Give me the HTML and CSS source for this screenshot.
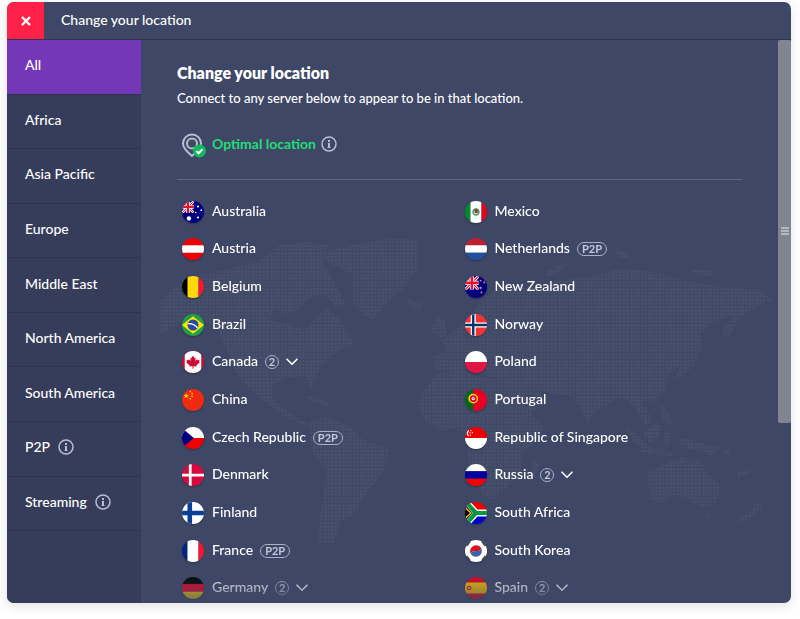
FILE: index.html
```html
<!DOCTYPE html>
<html lang="en">
<head>
    <meta charset="UTF-8">
    <meta name="viewport" content="width=device-width, initial-scale=1">
    <title>Change your location</title>
    <link rel="stylesheet" href="styles.css">
</head>
<body>
    <!-- Shared icons -->
    <svg class="sprite" aria-hidden="true">
        <symbol id="info" viewBox="0 0 16 16">
            <circle cx="8" cy="8" r="7" fill="none" stroke="currentColor" stroke-width="1.5"/>
            <path d="M8 4v2M8 7v5" fill="none" stroke="currentColor" stroke-width="2"/>
            <path d="M6.800 7.500h1.200M6.500 11.500h3" fill="none" stroke="currentColor"/>
        </symbol>
        <symbol id="chevron" viewBox="0 0 12 8">
            <path d="M1 1.2l5 5 5-5" fill="none" stroke="currentColor" stroke-width="1.6" stroke-linecap="round"/>
        </symbol>
        <symbol id="union" viewBox="0 0 12 12">
            <path fill="#00007f" d="M0 0h12v12H0z"/>
            <path d="M0 0l12 12M12 0L0 12" stroke="#fff" stroke-width="2.6"/>
            <path d="M0 0l12 12M12 0L0 12" stroke="#e8112d" stroke-width="1"/>
            <path d="M6 0v12M0 6h12" stroke="#fff" stroke-width="3.6"/>
            <path d="M6 0v12M0 6h12" stroke="#e8112d" stroke-width="2.2"/>
        </symbol>
    </svg>

    <div class="window">
        <header class="titlebar">
            <button class="close" type="button" aria-label="Close">
                <svg viewBox="0 0 12 12" width="12" height="12"><path d="M2 2l8 8M10 2l-8 8" stroke="#fff" stroke-width="2.4"/></svg>
            </button>
            <span class="titlebar-text">Change your location</span>
        </header>

        <div class="body">
            <nav class="sidebar">
                <a class="active" href="#all">All</a>
                <a href="#africa">Africa</a>
                <a href="#asia-pacific">Asia Pacific</a>
                <a href="#europe">Europe</a>
                <a href="#middle-east">Middle East</a>
                <a href="#north-america">North America</a>
                <a href="#south-america">South America</a>
                <a href="#p2p">P2P <svg class="info"><use href="#info"/></svg></a>
                <a href="#streaming">Streaming <svg class="info"><use href="#info"/></svg></a>
            </nav>

            <main class="content">
                <!-- Dotted world map behind the list -->
                <svg class="map" viewBox="141 40 650 563" preserveAspectRatio="xMidYMin meet" aria-hidden="true">
                    <defs>
                        <pattern id="dots" width="3.6" height="3.6" patternUnits="userSpaceOnUse">
                            <rect width="2.5" height="2.5" fill="#48516c"/>
                        </pattern>
                    </defs>
                    <g fill="url(#dots)">
                        <path d="M160 303l13-15 27-13 33-7 24-6 23-17 27-3 20 3-4 20 7 10 10 17 7 16-12-3-7-8-10-2-10 5-11 10-12 5-10-7-5 12 20 5 15 5 10-12 12-10 13 12 15 25-15 5-18 15-11 23-6-12-20 2-12 7-1 13 11 10 17 12 12 5-7 1-15-6-25-18-15-12-13-15-10-25-12-25-25-8-30 18z"/>
                        <path d="M323 252l30-7 37-7 27 2 1 28-15 20-16 14-14 18-10-5-10-13v-27l-26-13z"/>
                        <path d="M407 298l16 7-3 4-11-3zM308 396l14 3 8 6-3 2-12-5-8-3z"/>
                        <path d="M310 422l17-5 26 11 7 10 30 12-7 22-20 26-10 17-13 7-7 21h-15l2-25 7-46-15-20z"/>
                        <path d="M420 397l17-24 26-3 17 8 30 2 12 15 10 20 13 13-10 12-13 15v15l-15 17-15 13-10-5-12-25-3-30-7-12-20 2-15-10-7-15zM533 460l6 5-4 12-5-3z"/>
                        <path d="M435 370l-2-15 14-2-5-13 13-10 15-12 10-18 25-15 25 3 30-8 40-5 20-7 35 4 25 8 50 8 30 2 12 10-14 5-18 13-10 17-8 3 3-13 10-10-23 7-12 11 3 12-8 17-10 13-10 5 5-15-12 10-3 15-10 10-13 2 10 18-7 5-10-17-7-8-10-2-18 10-8 7-4 10-8-17-8-12-17-1-15-5 5 15-15 8-5-13-15-15-15-7-30-8z"/>
                        <path d="M430 330l8-14 7 5 2 14-8 3zM613 247l10 4 10 9-14-3zM545 273l12-7 12-3-7 7-14 7zM692 269l22 2-3 5-18-2z"/>
                        <path d="M625 425l18 15 12 12-5 3-18-15zM643 433l12-9 6 2-2 12-10 5zM660 405l6 3 6 14-5 3-5-8zM640 447l32 5v4l-32-4zM664 432l8 2-4 14-4-4zM680 438l18 4 22 6-8 8-10-5-12-2-10-5zM724 450h5v5h-5z"/>
                        <path d="M648 473l19-10 16-6 10 6 7-3 7 12 15 16-7 15-12 5-16-10-14-3-13 7-10-2zM704 513l7 1-3 6zM738 472l11-3v4l-11 5zM755 500l8 7-10 8-12 8-3-3 14-11z"/>
                    </g>
                </svg>

                <div class="panel">
                    <h1>Change your location</h1>
                    <p>Connect to any server below to appear to be in that location.</p>
                    <div class="optimal">
                        <svg class="pin" viewBox="0 -2 26 26">
                            <path d="M11 1.500a9 9 0 0 0-9 9c0 5.500 5.500 9.500 9 12.500 3.500-3 9-7 9-12.500a9 9 0 0 0-9-9z" fill="none" stroke="#b9bed2" stroke-width="2"/>
                            <circle cx="11" cy="10.500" r="5" fill="none" stroke="#b9bed2" stroke-width="2"/>
                            <circle cx="18.500" cy="18" r="6.500" fill="#10b95c"/>
                            <path d="M15.300 18.100l2.300 2.200 4-4.200" fill="none" stroke="#fff" stroke-width="2"/>
                        </svg>
                        <a href="#optimal">Optimal location</a>
                        <svg class="info"><use href="#info"/></svg>
                    </div>

                    <ul class="countries">
                        <li>
                            <svg class="flag" viewBox="0 0 24 24"><path fill="#00007f" d="M0 0h24v24H0z"/><use href="#union" width="13" height="13"/><circle cx="7.5" cy="19" r="2.4" fill="#fff"/><circle cx="17.5" cy="6" r="1.2" fill="#fff"/><circle cx="15" cy="12.5" r=".9" fill="#fff"/><circle cx="21" cy="10" r="1" fill="#fff"/><circle cx="17.5" cy="18" r="1.2" fill="#fff"/></svg>
                            <a href="#au">Australia</a>
                        </li>
                        <li>
                            <svg class="flag" viewBox="0 0 24 24"><path fill="#f00000" d="M0 0h24v24H0z"/><path fill="#fff" d="M0 8h24v8H0z"/></svg>
                            <a href="#at">Austria</a>
                        </li>
                        <li>
                            <svg class="flag" viewBox="0 0 24 24"><path fill="#000" d="M0 0h7v24H0z"/><path fill="#ffd90c" d="M6 0h12v24H6z"/><path fill="#f31830" d="M18 0h6v24h-6z"/></svg>
                            <a href="#be">Belgium</a>
                        </li>
                        <li>
                            <svg class="flag" viewBox="0 0 24 24"><path fill="#229e45" d="M0 0h24v24H0z"/><path fill="#f8e509" d="M12 2.500L24 12l-12 9.500L0 12z"/><circle cx="12" cy="12" r="6" fill="#2b49a3"/><path d="M6.500 10.500q6-.5 10.500 4.500" fill="none" stroke="#fff" stroke-width="1.3"/></svg>
                            <a href="#br">Brazil</a>
                        </li>
                        <li>
                            <svg class="flag" viewBox="0 0 24 24"><path fill="#d10a35" d="M0 0h24v24H0z"/><path fill="#fff" d="M3 0h18v24H3z"/><path fill="#d10a35" d="M12 5l1.600 2.800 1.500-.8-.8 4 2.200-2 .5 1.200 2.300-.4-.8 2.200 1 .6-3.800 3 .3 1.300-3.500-.4v2.800h-1v-2.800l-3.500.4.300-1.300-3.800-3 1-.6-.8-2.200 2.300.4.500-1.200 2.200 2-.8-4 1.500.8z"/></svg>
                            <a href="#ca">Canada</a>
                            <span class="count">2</span>
                            <button class="expand" type="button" aria-label="Show Canada locations"><svg><use href="#chevron"/></svg></button>
                        </li>
                        <li>
                            <svg class="flag" viewBox="0 0 24 24"><path fill="#ee2a10" d="M0 0h24v24H0z"/><path fill="#ffde00" d="M4.500 4.500l.8 2h2L5.800 7.800l.6 2-1.900-1.200-1.900 1.200.6-2L1.700 6.500h2z"/><g fill="#ffde00"><circle cx="9" cy="2.800" r=".9"/><circle cx="11" cy="5" r=".9"/><circle cx="11" cy="8" r=".9"/><circle cx="9" cy="10.500" r=".9"/></g></svg>
                            <a href="#cn">China</a>
                        </li>
                        <li>
                            <svg class="flag" viewBox="0 0 24 24"><path fill="#fff" d="M0 0h24v12H0z"/><path fill="#f00000" d="M0 12h24v12H0z"/><path fill="#00007f" d="M0 1l13 11L0 23z"/></svg>
                            <a href="#cz">Czech Republic</a>
                            <span class="tag">P2P</span>
                        </li>
                        <li>
                            <svg class="flag" viewBox="0 0 24 24"><path fill="#d9083c" d="M0 0h24v24H0z"/><path d="M9 0v24M0 12h24" stroke="#fff" stroke-width="3"/></svg>
                            <a href="#dk">Denmark</a>
                        </li>
                        <li>
                            <svg class="flag" viewBox="0 0 24 24"><path fill="#fff" d="M0 0h24v24H0z"/><path d="M8.500 0v24M0 12h24" stroke="#063f95" stroke-width="5"/></svg>
                            <a href="#fi">Finland</a>
                        </li>
                        <li>
                            <svg class="flag" viewBox="0 0 24 24"><path fill="#00267f" d="M0 0h6v24H0z"/><path fill="#fff" d="M6 0h12v24H6z"/><path fill="#f31830" d="M18 0h6v24h-6z"/></svg>
                            <a href="#fr">France</a>
                            <span class="tag">P2P</span>
                        </li>
                        <li>
                            <svg class="flag" viewBox="0 0 24 24"><path fill="#000" d="M0 0h24v8H0z"/><path fill="#f00020" d="M0 8h24v8H0z"/><path fill="#ffce00" d="M0 16h24v8H0z"/></svg>
                            <a href="#de">Germany</a>
                            <span class="count">2</span>
                            <button class="expand" type="button" aria-label="Show Germany locations"><svg><use href="#chevron"/></svg></button>
                        </li>
                        <li>
                            <svg class="flag" viewBox="0 0 24 24"><path fill="#008a2a" d="M0 0h6v24H0z"/><path fill="#fff" d="M6 0h12v24H6z"/><path fill="#e3051b" d="M18 0h6v24h-6z"/><circle cx="12" cy="12" r="3.200" fill="none" stroke="#5a9a78" stroke-width="1.6"/><path fill="#7a5230" d="M10 9.500l2.500-1.500 2 3-1 2.500-3-.5z"/></svg>
                            <a href="#mx">Mexico</a>
                        </li>
                        <li>
                            <svg class="flag" viewBox="0 0 24 24"><path fill="#c0202e" d="M0 0h24v8H0z"/><path fill="#fff" d="M0 8h24v8H0z"/><path fill="#2350a0" d="M0 16h24v8H0z"/></svg>
                            <a href="#nl">Netherlands</a>
                            <span class="tag">P2P</span>
                        </li>
                        <li>
                            <svg class="flag" viewBox="0 0 24 24"><path fill="#00007f" d="M0 0h24v24H0z"/><use href="#union" width="15" height="15"/><circle cx="17" cy="5" r="1" fill="#f08a9a"/><circle cx="21" cy="7" r="1" fill="#f08a9a"/><circle cx="17" cy="13" r="1.2" fill="#f08a9a"/><circle cx="18" cy="18" r="1" fill="#f08a9a"/></svg>
                            <a href="#nz">New Zealand</a>
                        </li>
                        <li>
                            <svg class="flag" viewBox="0 0 24 24"><path fill="#f23434" d="M0 0h24v24H0z"/><path d="M9 0v24M0 12h24" stroke="#fff" stroke-width="5.5"/><path d="M9 0v24M0 12h24" stroke="#06306b" stroke-width="2.6"/></svg>
                            <a href="#no">Norway</a>
                        </li>
                        <li>
                            <svg class="flag" viewBox="0 0 24 24"><path fill="#fff" d="M0 0h24v12H0z"/><path fill="#e01543" d="M0 12h24v12H0z"/></svg>
                            <a href="#pl">Poland</a>
                        </li>
                        <li>
                            <svg class="flag" viewBox="0 0 24 24"><path fill="#006a10" d="M0 0h9v24H0z"/><path fill="#e60026" d="M9 0h15v24H9z"/><circle cx="9" cy="10.5" r="4.5" fill="#e60026" stroke="#ffe11a" stroke-width="1.6"/><circle cx="9" cy="10.5" r="1.8" fill="#fff"/><circle cx="9" cy="10.5" r=".8" fill="#e60026"/></svg>
                            <a href="#pt">Portugal</a>
                        </li>
                        <li>
                            <svg class="flag" viewBox="0 0 24 24"><path fill="#f00000" d="M0 0h24v12H0z"/><path fill="#fff" d="M0 12h24v12H0z"/><path d="M4 3.500q-3 3 0 6.500" fill="none" stroke="#fff" stroke-width="1.3"/><g fill="#fff"><circle cx="6.500" cy="4" r=".7"/><circle cx="5.500" cy="6.500" r=".7"/><circle cx="8" cy="6" r=".7"/><circle cx="6" cy="9" r=".7"/></g></svg>
                            <a href="#sg">Republic of Singapore</a>
                        </li>
                        <li>
                            <svg class="flag" viewBox="0 0 24 24"><path fill="#fff" d="M0 0h24v8H0z"/><path fill="#0000a0" d="M0 8h24v8H0z"/><path fill="#f60000" d="M0 16h24v8H0z"/></svg>
                            <a href="#ru">Russia</a>
                            <span class="count">2</span>
                            <button class="expand" type="button" aria-label="Show Russia locations"><svg><use href="#chevron"/></svg></button>
                        </li>
                        <li>
                            <svg class="flag" viewBox="0 0 24 24"><path fill="#f00000" d="M0 0h24v12H0z"/><path fill="#0000c8" d="M0 12h24v12H0z"/><path d="M1 0l11 12L1 24M12 12h12" fill="none" stroke="#fff" stroke-width="7.5"/><path fill="#000" d="M0 3l8.500 9L0 21z"/><path d="M1 0l11 12L1 24M12 12h12" fill="none" stroke="#009a44" stroke-width="4.5"/><path d="M-1 5l7.500 7L-1 19" fill="none" stroke="#ffb612" stroke-width="1.6"/></svg>
                            <a href="#za">South Africa</a>
                        </li>
                        <li>
                            <svg class="flag" viewBox="0 0 24 24"><path fill="#fff" d="M0 0h24v24H0z"/><path d="M5.900 9.500A6.600 6.600 0 0 1 18.100 14.500q-3 1.500-6.100-2.500t-6.100-2.500z" fill="#d8131f" transform="rotate(-50 12 12)"/><path d="M5.900 9.500A6.600 6.600 0 0 0 18.100 14.500q-3 1.500-6.100-2.500t-6.100-2.500z" fill="#3a63ae" transform="rotate(-50 12 12)"/><path d="M1.500 6.500l4-5M18.500 1.500l4 5M1.500 17.500l4 5M18.500 22.500l4-5" stroke="#222" stroke-width="1.8"/></svg>
                            <a href="#kr">South Korea</a>
                        </li>
                        <li>
                            <svg class="flag" viewBox="0 0 24 24"><path fill="#e8001c" d="M0 0h24v24H0z"/><path fill="#ffc400" d="M0 6h24v12H0z"/><circle cx="4.5" cy="12" r="2.500" fill="#d8131f"/><circle cx="4.5" cy="12" r="1.2" fill="#f4c8a0"/></svg>
                            <a href="#es">Spain</a>
                            <span class="count">2</span>
                            <button class="expand" type="button" aria-label="Show Spain locations"><svg><use href="#chevron"/></svg></button>
                        </li>
                    </ul>
                </div>

                <div class="scrollbar">
                    <div class="thumb"><span></span><span></span><span></span></div>
                </div>
            </main>
        </div>
    </div>
</body>
</html>
```
FILE: styles.css
```css
* {
    box-sizing: border-box;
}
body {
    margin: 0;
    height: 100vh;
    padding: 2px 9px 16px 7px;
    background: #fff;
    color: #fff;
    font: 500 14px/18px Lato, "Liberation Sans", sans-serif;
}
a {
    color: inherit;
    text-decoration: none;
}
button {
    padding: 0;
    border: 0;
    background: none;
    color: inherit;
    cursor: pointer;
}
.sprite {
    display: none;
}

/* Window frame */
.window {
    height: 100%;
    display: flex;
    flex-direction: column;
    border-radius: 7px;
    overflow: hidden;
    background: #3e4765;
    box-shadow: 0 3px 12px rgba(0, 0, 0, 0.12);
}
.titlebar {
    display: flex;
    align-items: center;
    gap: 17px;
    height: 38px;
    border-bottom: 1px solid #2e3552;
}
.titlebar-text {
    padding-bottom: 2px;
}
.close {
    display: flex;
    align-items: center;
    justify-content: center;
    width: 37px;
    height: 37px;
    background: #ff2147;
}
.body {
    flex: 1;
    min-height: 0;
    display: flex;
}

/* Region list */
.sidebar {
    width: 134px;
    display: flex;
    flex-direction: column;
    padding-bottom: 72px;
    background: #363d5a;
}
.sidebar a {
    flex: 1;
    display: flex;
    align-items: center;
    gap: 8px;
    padding: 0 18px 3px;
    border-bottom: 1px solid #2d3350;
}
.sidebar .active {
    background: #7338b8;
}
.info {
    width: 16px;
    height: 16px;
    color: #b9bed2;
}

/* Server list */
.content {
    position: relative;
    flex: 1;
    min-width: 0;
    display: flex;
    justify-content: space-between;
}
.map {
    position: absolute;
    inset: 0;
    width: 100%;
    height: 100%;
}
.panel {
    position: relative;
    flex: 1;
    display: flex;
    flex-direction: column;
    padding: 24px 36px 0;
}
h1 {
    margin: 0 0 7px;
    font-size: 16px;
    line-height: 18px;
    font-weight: 800;
}
p {
    margin: 0 0 24px;
    font-size: 13px;
}
.optimal {
    display: flex;
    align-items: center;
    gap: 5px;
    padding: 0 4px 22px;
    border-bottom: 1px solid #5d6580;
    color: #21dd78;
    font-weight: 700;
}
.pin {
    width: 26px;
    height: 26px;
    overflow: visible;
}
.countries {
    flex: 1;
    display: grid;
    grid-auto-flow: column;
    grid-template-rows: repeat(11, 1fr);
    grid-template-columns: 1fr 1fr;
    margin: 13px 0 -4px;
    padding: 0;
    list-style: none;
    -webkit-mask-image: linear-gradient(#000 calc(100% - 38px), rgba(0, 0, 0, 0.2));
    mask-image: linear-gradient(#000 calc(100% - 38px), rgba(0, 0, 0, 0.2));
}
.countries li {
    display: flex;
    align-items: center;
    gap: 7px;
    padding-left: 5px;
}
.flag {
    width: 22px;
    height: 22px;
    margin-right: 1px;
    border-radius: 50%;
    box-shadow: 0 1px 2px rgba(0, 0, 0, 0.3);
}
.countries a {
    padding-bottom: 2px;
}
.tag,
.count {
    height: 14px;
    border: 1px solid #aab0c6;
    border-radius: 7px;
    color: #c3c8da;
    font-size: 11px;
    font-weight: 700;
    line-height: 12px;
    text-align: center;
}
.tag {
    width: 30px;
}
.count {
    width: 14px;
}
.expand {
    display: flex;
}
.expand svg {
    width: 12px;
    height: 8px;
}

/* Scrollbar */
.scrollbar {
    position: relative;
    width: 13px;
}
.thumb {
    display: flex;
    flex-direction: column;
    align-items: center;
    justify-content: center;
    gap: 1px;
    height: 68%;
    border-radius: 2px;
    background: #82858f;
}
.thumb span {
    width: 8px;
    height: 2px;
    background: #b4b7c0;
}
```
